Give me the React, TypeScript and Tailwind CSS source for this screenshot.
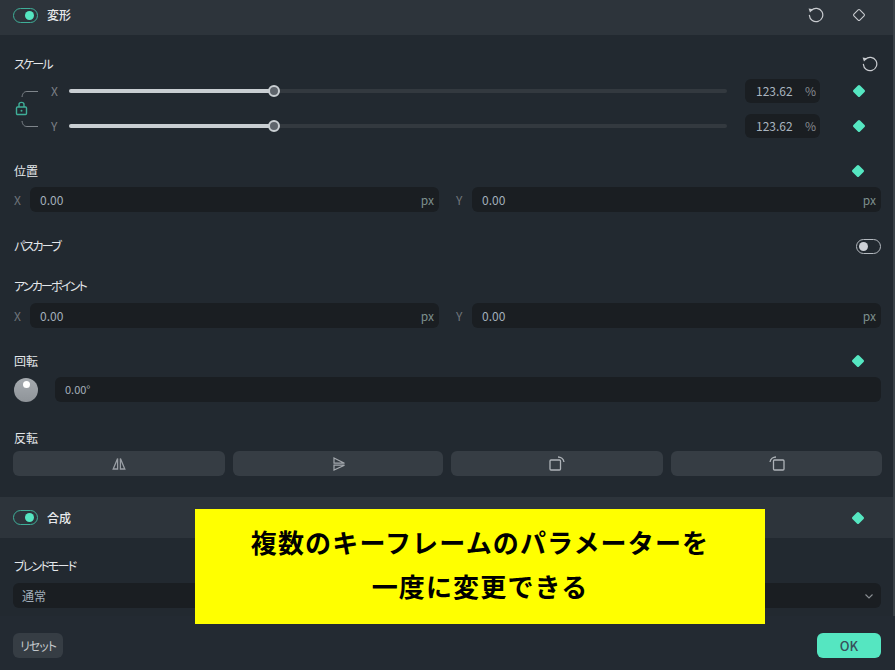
const font = { fontFamily: '"Noto Sans CJK JP", sans-serif' }

const Toggle = ({ on }: { on?: boolean }) =>
    on ? (
        <div className="flex h-[15px] w-[25px] items-center justify-end rounded-full border-[1.5px] border-[#3fae98] pr-[3px]">
            <div className="h-[9px] w-[9px] rounded-full bg-[#55e6c1]" />
        </div>
    ) : (
        <div className="flex h-[15px] w-[25px] items-center rounded-full border-[1.5px] border-[#b4b9bf] pl-[2px]">
            <div className="h-[9px] w-[9px] rounded-full bg-[#ccd0d6]" />
        </div>
    )

const Keyframe = () => (
    <svg width="14" height="14" viewBox="0 0 14 14">
        <rect x="2.3" y="2.3" width="9.4" height="9.4" rx="1.5" fill="#55e6c1" transform="rotate(45 7 7)" />
    </svg>
)

const Reset = () => (
    <svg width="16" height="16" viewBox="0 0 16 16" fill="none">
        <path d="M3.4 3.2A6.7 6.7 0 1 1 1.4 8.4" stroke="#c9ccd0" strokeWidth="1.2" strokeLinecap="round" />
        <path d="M0.6 1.6L5.4 2.2L2 5.6Z" fill="#c9ccd0" />
    </svg>
)

// katakana labels sit tighter than kanji ones in the reference
const Label = ({ children, kana }: { children: string; kana?: boolean }) => (
    <span className={`ml-px text-[12px] leading-[18px] text-[#e4e7ea] ${kana ? "tracking-[-1.8px] [font-feature-settings:'palt']" : ""}`}>
        {children}
    </span>
)

const Header = ({ title, right, className }: { title: string; right: React.ReactNode; className: string }) => (
    <div className={`flex items-center bg-[#2d343b] pl-[13px] ${className}`}>
        <Toggle on />
        <span className="ml-[9px] text-[12px] font-medium text-[#e8eaec]">{title}</span>
        <div className="flex-1" />
        {right}
    </div>
)

const SliderRow = ({ axis, className }: { axis: string; className: string }) => (
    <div className={`flex h-[24px] items-center ${className}`}>
        <span className="ml-[51px] w-[18px] text-[12px] text-[#7b8087]">{axis}</span>
        <div className="relative h-[4px] w-[658px] rounded-full bg-[#33393f]">
            <div className="h-full w-[205px] rounded-full bg-[#c9ced2]" />
            <div className="absolute left-[199px] top-[-4px] h-[12px] w-[12px] rounded-full border-2 border-[#c9ced2] bg-[#5e646b]" />
        </div>
        <div className="ml-[18px] flex h-[24px] w-[75px] items-center rounded-md bg-[#1a1e22] pl-[11px] text-[12px] text-[#a9b4bf]">
            <span className="w-[49px]">123.62</span>
            <span className="text-[#858a8f]">%</span>
        </div>
        <div className="ml-[32px]">
            <Keyframe />
        </div>
    </div>
)

const NumberInput = ({ axis, width, gap }: { axis: string; width: string; gap: string }) => (
    <div className={`flex items-center ${gap}`}>
        <span className="ml-px w-[16px] text-[12px] text-[#6f757b]">{axis}</span>
        <div className={`flex h-[25px] items-center justify-between rounded-md bg-[#1a1e22] pl-[10px] pr-[5px] text-[12px] ${width}`}>
            <span className="text-[#a3afbb]">0.00</span>
            <span className="text-[#7d8f8c]">px</span>
        </div>
    </div>
)

const InputPair = ({ className }: { className: string }) => (
    <div className={`flex pl-[13px] ${className}`}>
        <NumberInput axis="X" width="w-[409px]" gap="" />
        <NumberInput axis="Y" width="w-[409px]" gap="ml-[16px]" />
    </div>
)

const FlipButton = ({ width, children }: { width: string; children: React.ReactNode }) => (
    <div className={`flex h-[25px] items-center justify-center rounded-md bg-[#363d44] ${width}`}>{children}</div>
)

export default function App() {
    return (
        <div className="relative flex h-[670px] w-[895px] flex-col overflow-hidden bg-[#222930]" style={font}>
            <Header
                title="変形"
                className="h-[35px] pb-[5px] pr-[29px]"
                right={
                    <div className="flex items-center gap-[28px]">
                        <Reset />
                        <svg width="14" height="14" viewBox="0 0 14 14" fill="none">
                            <rect x="2.8" y="2.8" width="8.4" height="8.4" rx="1.2" stroke="#c9ccd0" strokeWidth="1.1" transform="rotate(45 7 7)" />
                        </svg>
                    </div>
                }
            />

            {/* Scale */}
            <div className="mt-[20px] flex h-[18px] items-center justify-between pl-[13px] pr-[17px]">
                <Label kana>スケール</Label>
                <Reset />
            </div>
            <div className="relative">
                <svg className="absolute left-[14px] top-[17px]" width="26" height="44" viewBox="0 0 26 44" fill="none">
                    <path d="M8 7C8.5 3 10.5 1.5 13 1.5H24" stroke="#7f858b" />
                    <path d="M8 31C8.5 35 10.5 36.5 13 36.5H24" stroke="#7f858b" />
                    <rect x="2.5" y="17" width="10" height="7.5" rx="1" stroke="#3fae98" strokeWidth="1.4" />
                    <path d="M5 17V14.5C5 11.6 10 11.6 10 14.5V17" stroke="#3fae98" strokeWidth="1.4" />
                    <circle cx="7.5" cy="20.7" r="1" fill="#3fae98" />
                </svg>
                <SliderRow axis="X" className="mt-[6px]" />
                <SliderRow axis="Y" className="mt-[11px]" />
            </div>

            {/* Position */}
            <div className="mt-[24px] flex h-[18px] items-center justify-between pl-[13px] pr-[30px]">
                <Label>位置</Label>
                <Keyframe />
            </div>
            <InputPair className="mt-[7px]" />

            {/* Path curve */}
            <div className="mt-[25px] flex h-[18px] items-center justify-between pl-[13px] pr-[14px]">
                <Label kana>パスカーブ</Label>
                <Toggle />
            </div>

            {/* Anchor point */}
            <div className="mt-[22px] flex h-[18px] items-center pl-[13px]">
                <Label kana>アンカーポイント</Label>
            </div>
            <InputPair className="mt-[8px]" />

            {/* Rotation */}
            <div className="mt-[24px] flex h-[18px] items-center justify-between pl-[13px] pr-[30px]">
                <Label>回転</Label>
                <Keyframe />
            </div>
            <div className="mt-[7px] flex items-center pl-[14px]">
                <div className="flex h-[24px] w-[24px] justify-center rounded-full bg-gradient-to-b from-[#a6abb0] to-[#8f9499] pt-[3px]">
                    <div className="h-[7px] w-[7px] rounded-full bg-white" />
                </div>
                <div className="ml-[17px] flex h-[25px] w-[826px] items-center rounded-md bg-[#1a1e22] pl-[10px] text-[11px] text-[#a3afbb]">
                    0.00°
                </div>
            </div>

            {/* Flip */}
            <div className="mt-[27px] flex h-[18px] items-center pl-[13px]">
                <Label>反転</Label>
            </div>
            <div className="mt-[4px] flex gap-[8px] pl-[13px]">
                <FlipButton width="w-[212px]">
                    <svg width="14" height="14" viewBox="0 0 14 14" fill="none" stroke="#9a9fa5" strokeWidth="1.3">
                        <path d="M5.6 1.5V12H1.2Z" />
                        <path d="M8.4 1.5V12H12.8Z" />
                    </svg>
                </FlipButton>
                <FlipButton width="w-[210px]">
                    <svg width="14" height="14" viewBox="0 0 14 14" fill="none" stroke="#a3a8ad" strokeWidth="1.2">
                        <path d="M3 1L13.5 6.2H3Z" />
                        <path d="M3 8.2H13.5L3 13Z" />
                    </svg>
                </FlipButton>
                <FlipButton width="w-[212px]">
                    <svg width="16" height="16" viewBox="0 0 16 16" fill="none" stroke="#aeb3b8" strokeWidth="1.3">
                        <rect x="1" y="4" width="10.5" height="10" rx="1" />
                        <path d="M9 1C11.8 1 14.5 3 15 6" />
                    </svg>
                </FlipButton>
                <FlipButton width="w-[211px]">
                    <svg width="16" height="16" viewBox="0 0 16 16" fill="none" stroke="#aeb3b8" strokeWidth="1.3">
                        <rect x="4.5" y="4" width="10.5" height="10" rx="1" />
                        <path d="M7 1C4.2 1 1.5 3 1 6" />
                    </svg>
                </FlipButton>
            </div>

            {/* Composite */}
            <Header title="合成" className="mt-[21px] h-[41px] pr-[30px]" right={<Keyframe />} />
            <div className="mt-[19px] flex h-[18px] items-center pl-[13px]">
                <Label kana>ブレンドモード</Label>
            </div>
            <div className="mt-[8px] px-[13px] pr-[14px]">
                <div className="flex h-[25px] items-center justify-between rounded-md bg-[#1a1e22] pl-[9px] pr-[7px] text-[12px] text-[#a3afbb]">
                    <span>通常</span>
                    <svg width="10" height="10" viewBox="0 0 10 10" fill="none" stroke="#8a8f94" strokeWidth="1.1">
                        <path d="M1.5 3.5L5 7L8.5 3.5" />
                    </svg>
                </div>
            </div>

            {/* Footer */}
            <div className="mt-[8px] flex flex-1 items-start justify-between bg-[#232a32] pl-[13px] pr-[14px] pt-[17px]">
                <div className="flex h-[25px] w-[50px] items-center justify-center rounded-md bg-[#363d44] text-[12px] tracking-[-1px] text-[#c3c7cb] [font-feature-settings:'palt']">
                    リセット
                </div>
                <div className="flex h-[25px] w-[64px] items-center justify-center rounded-md bg-[#55e6c1] text-[13px] font-medium text-[#38505a]">
                    OK
                </div>
            </div>

            {/* Scrollbar */}
            <div className="absolute right-0 top-0 h-[616px] w-[2px] bg-[#3a4147]" />

            {/* Caption overlay */}
            <div className="absolute left-[195px] top-[509px] flex h-[115px] w-[570px] flex-col items-center justify-center bg-[#ffff00] pb-[6px] text-[26px] font-bold leading-[44px] tracking-[1.15px] text-black">
                <span>複数のキーフレームのパラメーターを</span>
                <span>一度に変更できる</span>
            </div>
        </div>
    )
}
